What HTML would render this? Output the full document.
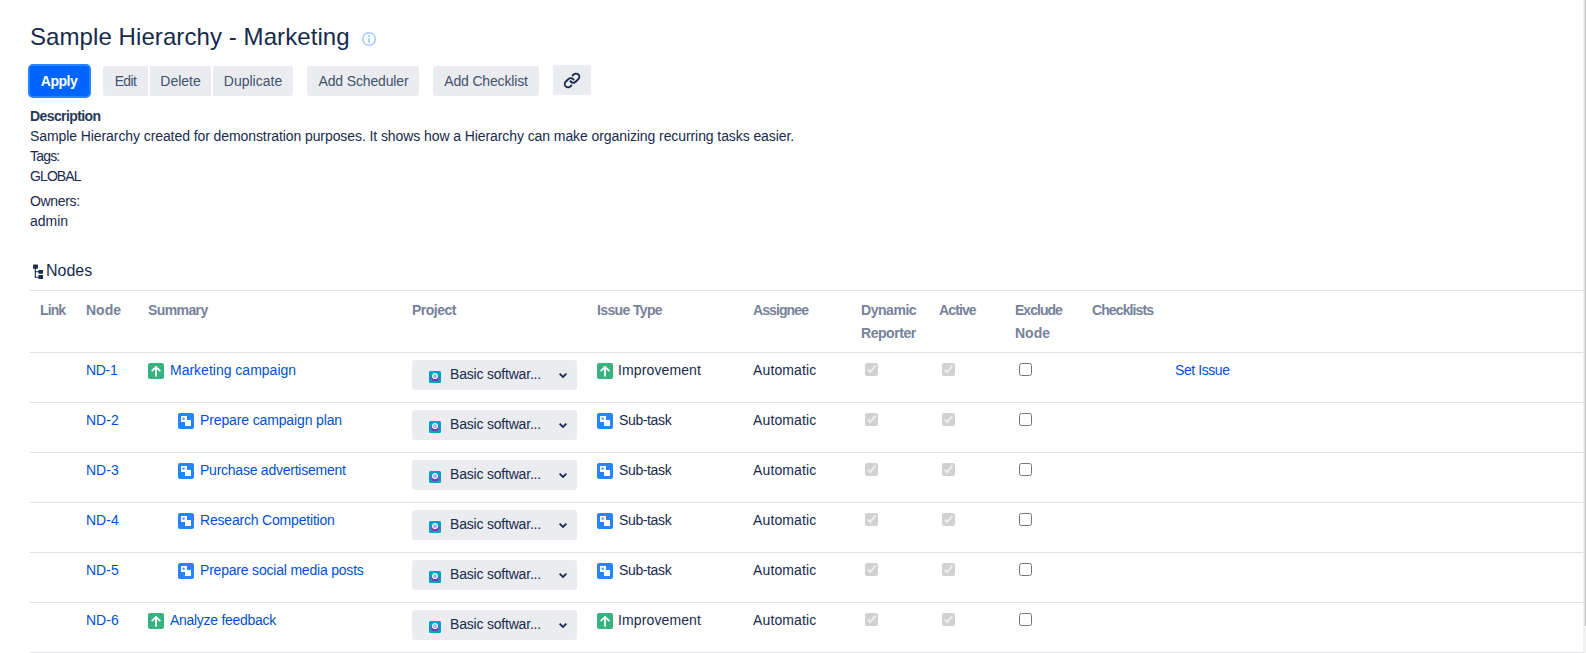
<!DOCTYPE html>
<html>
<head>
<meta charset="utf-8">
<style>
html,body{margin:0;padding:0;background:#fff;}
body{width:1586px;height:653px;overflow:hidden;position:relative;font-family:"Liberation Sans",sans-serif;color:#172b4d;font-size:14px;line-height:20px;}
.a{position:absolute;white-space:nowrap;}
.title{left:30px;top:22px;letter-spacing:0.08px;font-size:24px;line-height:30px;color:#172b4d;}
.btn{position:absolute;top:66px;height:30px;background:#ebecf0;color:#42526e;text-align:center;line-height:30px;font-size:14px;}
.apply{left:30px;width:59px;background:#0065ff;color:#fff;font-weight:700;border-radius:3px;box-shadow:0 0 0 2px #2684ff;}
.lbl{left:30px;}
.hdr{position:absolute;top:290px;left:30px;width:1553px;height:61px;border-top:1px solid #dfe1e6;}
.th{position:absolute;color:#76829a;font-weight:700;line-height:23px;top:299px;white-space:nowrap;}
.row{position:absolute;left:30px;width:1553px;height:49px;border-bottom:1px solid #dfe1e6;}
.lnk{color:#0052cc;}
.cell{position:absolute;top:10px;white-space:nowrap;line-height:20px;}
.sel{position:absolute;left:382px;top:7px;width:165px;height:30px;background:#ebecf0;border-radius:3px;}
.cb{position:absolute;margin:0;width:13px;height:13px;top:10px;}
.sb{position:absolute;right:0;top:0;width:3px;height:653px;background:#f1f1f1;}
</style>
</head>
<body>
<div class="a title">Sample Hierarchy - Marketing</div>
<svg class="a" style="left:361px;top:31px" width="16" height="16" viewBox="0 0 16 16">
  <circle cx="8" cy="8" r="6.3" fill="none" stroke="#a6cbff" stroke-width="1.5"/>
  <rect x="7.1" y="4.3" width="1.8" height="1.7" fill="#a6cbff"/>
  <rect x="7.1" y="7.2" width="1.8" height="4.6" fill="#a6cbff"/>
</svg>

<div class="btn apply" style="letter-spacing:-0.5px;text-indent:-1px;">Apply</div>
<div class="btn" style="left:103px;width:45px;border-radius:3px 0 0 3px;letter-spacing:-0.6px;">Edit</div>
<div class="btn" style="left:150px;width:61px;">Delete</div>
<div class="btn" style="left:213px;width:80px;border-radius:0 3px 3px 0;">Duplicate</div>
<div class="btn" style="left:307px;width:112px;border-radius:3px;letter-spacing:-0.15px;text-indent:1px">Add Scheduler</div>
<div class="btn" style="left:433px;width:106px;border-radius:3px;letter-spacing:-0.17px;">Add Checklist</div>
<div class="btn" style="left:553px;top:65px;width:38px;border-radius:3px;">
<svg style="position:absolute;left:8px;top:4px" width="22" height="22" viewBox="0 0 24 24"><g fill="#172b4d"><path d="M12.856 5.457l-.937.92a1.002 1.002 0 000 1.437 1.047 1.047 0 001.463 0l.984-.966c.967-.95 2.542-1.135 3.602-.288a2.54 2.54 0 01.203 3.810l-2.903 2.852a2.646 2.646 0 01-3.696 0l-1.110-1.090L9 13.570l1.108 1.089c1.822 1.788 4.802 1.788 6.622 0l2.905-2.852a4.558 4.558 0 00-.357-6.820c-1.893-1.517-4.695-1.226-6.422.47"/><path d="M11.144 19.543l.937-.92a1.002 1.002 0 000-1.437 1.047 1.047 0 00-1.462 0l-.985.966c-.967.95-2.542 1.135-3.602.288a2.54 2.54 0 01-.203-3.810l2.903-2.852a2.646 2.646 0 013.696 0l1.110 1.090L15 11.430l-1.108-1.089c-1.822-1.788-4.802-1.788-6.622 0l-2.905 2.852a4.558 4.558 0 00.357 6.820c1.893 1.517 4.695 1.226 6.422-.47"/></g></svg>
</div>

<div class="a lbl" style="top:106px;font-weight:700;letter-spacing:-0.6px;color:#263859;">Description</div>
<div class="a lbl" style="top:126px;letter-spacing:-0.084px;">Sample Hierarchy created for demonstration purposes. It shows how a Hierarchy can make organizing recurring tasks easier.</div>
<div class="a lbl" style="top:146px;letter-spacing:-0.8px;">Tags:</div>
<div class="a lbl" style="top:166px;letter-spacing:-0.9px;">GLOBAL</div>
<div class="a lbl" style="top:191px;letter-spacing:-0.33px;">Owners:</div>
<div class="a lbl" style="top:211px;">admin</div>

<svg class="a" style="left:32px;top:263px" width="12" height="17" viewBox="0 0 12 17">
  <rect x="1" y="1.5" width="5" height="4.3" rx="0.9" fill="#172b4d"/>
  <path d="M3.3 5 V14.3 H7 M3.3 8.8 H7" fill="none" stroke="#172b4d" stroke-width="1.1"/>
  <rect x="6.5" y="7" width="4.6" height="3.7" rx="0.6" fill="#172b4d"/>
  <rect x="6.5" y="12" width="4.6" height="4" rx="0.6" fill="#172b4d"/>
</svg>
<div class="a" style="left:46px;top:261px;font-size:16px;">Nodes</div>

<div class="hdr"></div>
<div class="th" style="left:40px;letter-spacing:-0.9px;">Link</div>
<div class="th" style="left:86px;">Node</div>
<div class="th" style="left:148px;letter-spacing:-0.6px;">Summary</div>
<div class="th" style="left:412px;letter-spacing:-0.5px;">Project</div>
<div class="th" style="left:597px;letter-spacing:-0.63px;">Issue Type</div>
<div class="th" style="left:753px;letter-spacing:-0.9px;">Assignee</div>
<div class="th" style="left:861px;letter-spacing:-0.45px;">Dynamic<br>Reporter</div>
<div class="th" style="left:939px;letter-spacing:-0.88px;">Active</div>
<div class="th" style="left:1015px;"><span style="letter-spacing:-0.98px">Exclude</span><br>Node</div>
<div class="th" style="left:1092px;letter-spacing:-0.9px;">Checklists</div>
<div class="a" style="left:30px;top:352px;width:1553px;height:1px;background:#dfe1e6;"></div>


<div class="row" style="top:353px">
<div class="cell lnk" style="left:56px;top:7px;letter-spacing:-0.3px">ND-1</div>
<svg style="position:absolute;left:118px;top:10px" width="16" height="16" viewBox="0 0 16 16"><rect width="16" height="16" rx="2" fill="#36b37e"/><path d="M8 12.5V4M4.3 7.6L8 3.9 11.7 7.6" fill="none" stroke="#fff" stroke-width="1.8" stroke-linecap="square"/></svg><div class="cell lnk" style="left:140px;top:7px;letter-spacing:0px">Marketing campaign</div>
<div class="sel"><svg style="position:absolute;left:17px;top:11px" width="12" height="12" viewBox="0 0 12 12"><rect width="12" height="12" rx="1.5" fill="#00a3bf"/><ellipse cx="6" cy="7" rx="4.5" ry="2.4" fill="#8d44cf"/><rect x="3.2" y="7.5" width="5.6" height="2.4" rx="0.8" fill="#7a35b8"/><circle cx="6" cy="5.1" r="2.6" fill="#8fc1f5" stroke="#fff" stroke-width="1"/><circle cx="6" cy="4.9" r="0.9" fill="#c9a0d8"/></svg><div class="cell" style="left:38px;top:4px;letter-spacing:-0.2px">Basic softwar...</div><svg style="position:absolute;left:146px;top:11.5px" width="10" height="7" viewBox="0 0 10 7"><path d="M1.6 1.6L5 5 8.4 1.6" fill="none" stroke="#172b4d" stroke-width="1.8"/></svg></div>
<svg style="position:absolute;left:567px;top:10px" width="16" height="16" viewBox="0 0 16 16"><rect width="16" height="16" rx="2" fill="#36b37e"/><path d="M8 12.5V4M4.3 7.6L8 3.9 11.7 7.6" fill="none" stroke="#fff" stroke-width="1.8" stroke-linecap="square"/></svg><div class="cell" style="left:588px;top:7px;letter-spacing:0.12px">Improvement</div>
<div class="cell" style="left:723px;top:7px;letter-spacing:0.13px">Automatic</div>
<input type="checkbox" class="cb" style="left:835px" checked disabled>
<input type="checkbox" class="cb" style="left:912px" checked disabled>
<input type="checkbox" class="cb" style="left:989px">
<div class="cell lnk" style="left:1145px;top:7px;letter-spacing:-0.42px">Set Issue</div>
</div>
<div class="row" style="top:403px">
<div class="cell lnk" style="left:56px;top:7px;letter-spacing:0px">ND-2</div>
<svg style="position:absolute;left:148px;top:10px" width="16" height="16" viewBox="0 0 16 16"><rect width="16" height="16" rx="2" fill="#2684ff"/><rect x="3" y="3" width="6" height="6" fill="#fff"/><rect x="7" y="7" width="6" height="6" fill="#fff"/><rect x="4.6" y="4.6" width="2" height="2" fill="#2684ff"/></svg><div class="cell lnk" style="left:170px;top:7px;letter-spacing:-0.13px">Prepare campaign plan</div>
<div class="sel"><svg style="position:absolute;left:17px;top:11px" width="12" height="12" viewBox="0 0 12 12"><rect width="12" height="12" rx="1.5" fill="#00a3bf"/><ellipse cx="6" cy="7" rx="4.5" ry="2.4" fill="#8d44cf"/><rect x="3.2" y="7.5" width="5.6" height="2.4" rx="0.8" fill="#7a35b8"/><circle cx="6" cy="5.1" r="2.6" fill="#8fc1f5" stroke="#fff" stroke-width="1"/><circle cx="6" cy="4.9" r="0.9" fill="#c9a0d8"/></svg><div class="cell" style="left:38px;top:4px;letter-spacing:-0.2px">Basic softwar...</div><svg style="position:absolute;left:146px;top:11.5px" width="10" height="7" viewBox="0 0 10 7"><path d="M1.6 1.6L5 5 8.4 1.6" fill="none" stroke="#172b4d" stroke-width="1.8"/></svg></div>
<svg style="position:absolute;left:567px;top:10px" width="16" height="16" viewBox="0 0 16 16"><rect width="16" height="16" rx="2" fill="#2684ff"/><rect x="3" y="3" width="6" height="6" fill="#fff"/><rect x="7" y="7" width="6" height="6" fill="#fff"/><rect x="4.6" y="4.6" width="2" height="2" fill="#2684ff"/></svg><div class="cell" style="left:589px;top:7px;letter-spacing:-0.37px">Sub-task</div>
<div class="cell" style="left:723px;top:7px;letter-spacing:0.13px">Automatic</div>
<input type="checkbox" class="cb" style="left:835px" checked disabled>
<input type="checkbox" class="cb" style="left:912px" checked disabled>
<input type="checkbox" class="cb" style="left:989px">

</div>
<div class="row" style="top:453px">
<div class="cell lnk" style="left:56px;top:7px;letter-spacing:0px">ND-3</div>
<svg style="position:absolute;left:148px;top:10px" width="16" height="16" viewBox="0 0 16 16"><rect width="16" height="16" rx="2" fill="#2684ff"/><rect x="3" y="3" width="6" height="6" fill="#fff"/><rect x="7" y="7" width="6" height="6" fill="#fff"/><rect x="4.6" y="4.6" width="2" height="2" fill="#2684ff"/></svg><div class="cell lnk" style="left:170px;top:7px;letter-spacing:-0.24px">Purchase advertisement</div>
<div class="sel"><svg style="position:absolute;left:17px;top:11px" width="12" height="12" viewBox="0 0 12 12"><rect width="12" height="12" rx="1.5" fill="#00a3bf"/><ellipse cx="6" cy="7" rx="4.5" ry="2.4" fill="#8d44cf"/><rect x="3.2" y="7.5" width="5.6" height="2.4" rx="0.8" fill="#7a35b8"/><circle cx="6" cy="5.1" r="2.6" fill="#8fc1f5" stroke="#fff" stroke-width="1"/><circle cx="6" cy="4.9" r="0.9" fill="#c9a0d8"/></svg><div class="cell" style="left:38px;top:4px;letter-spacing:-0.2px">Basic softwar...</div><svg style="position:absolute;left:146px;top:11.5px" width="10" height="7" viewBox="0 0 10 7"><path d="M1.6 1.6L5 5 8.4 1.6" fill="none" stroke="#172b4d" stroke-width="1.8"/></svg></div>
<svg style="position:absolute;left:567px;top:10px" width="16" height="16" viewBox="0 0 16 16"><rect width="16" height="16" rx="2" fill="#2684ff"/><rect x="3" y="3" width="6" height="6" fill="#fff"/><rect x="7" y="7" width="6" height="6" fill="#fff"/><rect x="4.6" y="4.6" width="2" height="2" fill="#2684ff"/></svg><div class="cell" style="left:589px;top:7px;letter-spacing:-0.37px">Sub-task</div>
<div class="cell" style="left:723px;top:7px;letter-spacing:0.13px">Automatic</div>
<input type="checkbox" class="cb" style="left:835px" checked disabled>
<input type="checkbox" class="cb" style="left:912px" checked disabled>
<input type="checkbox" class="cb" style="left:989px">

</div>
<div class="row" style="top:503px">
<div class="cell lnk" style="left:56px;top:7px;letter-spacing:0px">ND-4</div>
<svg style="position:absolute;left:148px;top:10px" width="16" height="16" viewBox="0 0 16 16"><rect width="16" height="16" rx="2" fill="#2684ff"/><rect x="3" y="3" width="6" height="6" fill="#fff"/><rect x="7" y="7" width="6" height="6" fill="#fff"/><rect x="4.6" y="4.6" width="2" height="2" fill="#2684ff"/></svg><div class="cell lnk" style="left:170px;top:7px;letter-spacing:-0.19px">Research Competition</div>
<div class="sel"><svg style="position:absolute;left:17px;top:11px" width="12" height="12" viewBox="0 0 12 12"><rect width="12" height="12" rx="1.5" fill="#00a3bf"/><ellipse cx="6" cy="7" rx="4.5" ry="2.4" fill="#8d44cf"/><rect x="3.2" y="7.5" width="5.6" height="2.4" rx="0.8" fill="#7a35b8"/><circle cx="6" cy="5.1" r="2.6" fill="#8fc1f5" stroke="#fff" stroke-width="1"/><circle cx="6" cy="4.9" r="0.9" fill="#c9a0d8"/></svg><div class="cell" style="left:38px;top:4px;letter-spacing:-0.2px">Basic softwar...</div><svg style="position:absolute;left:146px;top:11.5px" width="10" height="7" viewBox="0 0 10 7"><path d="M1.6 1.6L5 5 8.4 1.6" fill="none" stroke="#172b4d" stroke-width="1.8"/></svg></div>
<svg style="position:absolute;left:567px;top:10px" width="16" height="16" viewBox="0 0 16 16"><rect width="16" height="16" rx="2" fill="#2684ff"/><rect x="3" y="3" width="6" height="6" fill="#fff"/><rect x="7" y="7" width="6" height="6" fill="#fff"/><rect x="4.6" y="4.6" width="2" height="2" fill="#2684ff"/></svg><div class="cell" style="left:589px;top:7px;letter-spacing:-0.37px">Sub-task</div>
<div class="cell" style="left:723px;top:7px;letter-spacing:0.13px">Automatic</div>
<input type="checkbox" class="cb" style="left:835px" checked disabled>
<input type="checkbox" class="cb" style="left:912px" checked disabled>
<input type="checkbox" class="cb" style="left:989px">

</div>
<div class="row" style="top:553px">
<div class="cell lnk" style="left:56px;top:7px;letter-spacing:0px">ND-5</div>
<svg style="position:absolute;left:148px;top:10px" width="16" height="16" viewBox="0 0 16 16"><rect width="16" height="16" rx="2" fill="#2684ff"/><rect x="3" y="3" width="6" height="6" fill="#fff"/><rect x="7" y="7" width="6" height="6" fill="#fff"/><rect x="4.6" y="4.6" width="2" height="2" fill="#2684ff"/></svg><div class="cell lnk" style="left:170px;top:7px;letter-spacing:-0.2px">Prepare social media posts</div>
<div class="sel"><svg style="position:absolute;left:17px;top:11px" width="12" height="12" viewBox="0 0 12 12"><rect width="12" height="12" rx="1.5" fill="#00a3bf"/><ellipse cx="6" cy="7" rx="4.5" ry="2.4" fill="#8d44cf"/><rect x="3.2" y="7.5" width="5.6" height="2.4" rx="0.8" fill="#7a35b8"/><circle cx="6" cy="5.1" r="2.6" fill="#8fc1f5" stroke="#fff" stroke-width="1"/><circle cx="6" cy="4.9" r="0.9" fill="#c9a0d8"/></svg><div class="cell" style="left:38px;top:4px;letter-spacing:-0.2px">Basic softwar...</div><svg style="position:absolute;left:146px;top:11.5px" width="10" height="7" viewBox="0 0 10 7"><path d="M1.6 1.6L5 5 8.4 1.6" fill="none" stroke="#172b4d" stroke-width="1.8"/></svg></div>
<svg style="position:absolute;left:567px;top:10px" width="16" height="16" viewBox="0 0 16 16"><rect width="16" height="16" rx="2" fill="#2684ff"/><rect x="3" y="3" width="6" height="6" fill="#fff"/><rect x="7" y="7" width="6" height="6" fill="#fff"/><rect x="4.6" y="4.6" width="2" height="2" fill="#2684ff"/></svg><div class="cell" style="left:589px;top:7px;letter-spacing:-0.37px">Sub-task</div>
<div class="cell" style="left:723px;top:7px;letter-spacing:0.13px">Automatic</div>
<input type="checkbox" class="cb" style="left:835px" checked disabled>
<input type="checkbox" class="cb" style="left:912px" checked disabled>
<input type="checkbox" class="cb" style="left:989px">

</div>
<div class="row" style="top:603px">
<div class="cell lnk" style="left:56px;top:7px;letter-spacing:0px">ND-6</div>
<svg style="position:absolute;left:118px;top:10px" width="16" height="16" viewBox="0 0 16 16"><rect width="16" height="16" rx="2" fill="#36b37e"/><path d="M8 12.5V4M4.3 7.6L8 3.9 11.7 7.6" fill="none" stroke="#fff" stroke-width="1.8" stroke-linecap="square"/></svg><div class="cell lnk" style="left:140px;top:7px;letter-spacing:-0.29px">Analyze feedback</div>
<div class="sel"><svg style="position:absolute;left:17px;top:11px" width="12" height="12" viewBox="0 0 12 12"><rect width="12" height="12" rx="1.5" fill="#00a3bf"/><ellipse cx="6" cy="7" rx="4.5" ry="2.4" fill="#8d44cf"/><rect x="3.2" y="7.5" width="5.6" height="2.4" rx="0.8" fill="#7a35b8"/><circle cx="6" cy="5.1" r="2.6" fill="#8fc1f5" stroke="#fff" stroke-width="1"/><circle cx="6" cy="4.9" r="0.9" fill="#c9a0d8"/></svg><div class="cell" style="left:38px;top:4px;letter-spacing:-0.2px">Basic softwar...</div><svg style="position:absolute;left:146px;top:11.5px" width="10" height="7" viewBox="0 0 10 7"><path d="M1.6 1.6L5 5 8.4 1.6" fill="none" stroke="#172b4d" stroke-width="1.8"/></svg></div>
<svg style="position:absolute;left:567px;top:10px" width="16" height="16" viewBox="0 0 16 16"><rect width="16" height="16" rx="2" fill="#36b37e"/><path d="M8 12.5V4M4.3 7.6L8 3.9 11.7 7.6" fill="none" stroke="#fff" stroke-width="1.8" stroke-linecap="square"/></svg><div class="cell" style="left:588px;top:7px;letter-spacing:0.12px">Improvement</div>
<div class="cell" style="left:723px;top:7px;letter-spacing:0.13px">Automatic</div>
<input type="checkbox" class="cb" style="left:835px" checked disabled>
<input type="checkbox" class="cb" style="left:912px" checked disabled>
<input type="checkbox" class="cb" style="left:989px">

</div>
<div class="sb"></div><div style="position:absolute;left:1585px;top:0;width:1px;height:626px;background:#c1c1c1"></div><div style="position:absolute;left:1584px;top:0;width:1px;height:626px;background:#e4e4e4"></div>
</body>
</html>
